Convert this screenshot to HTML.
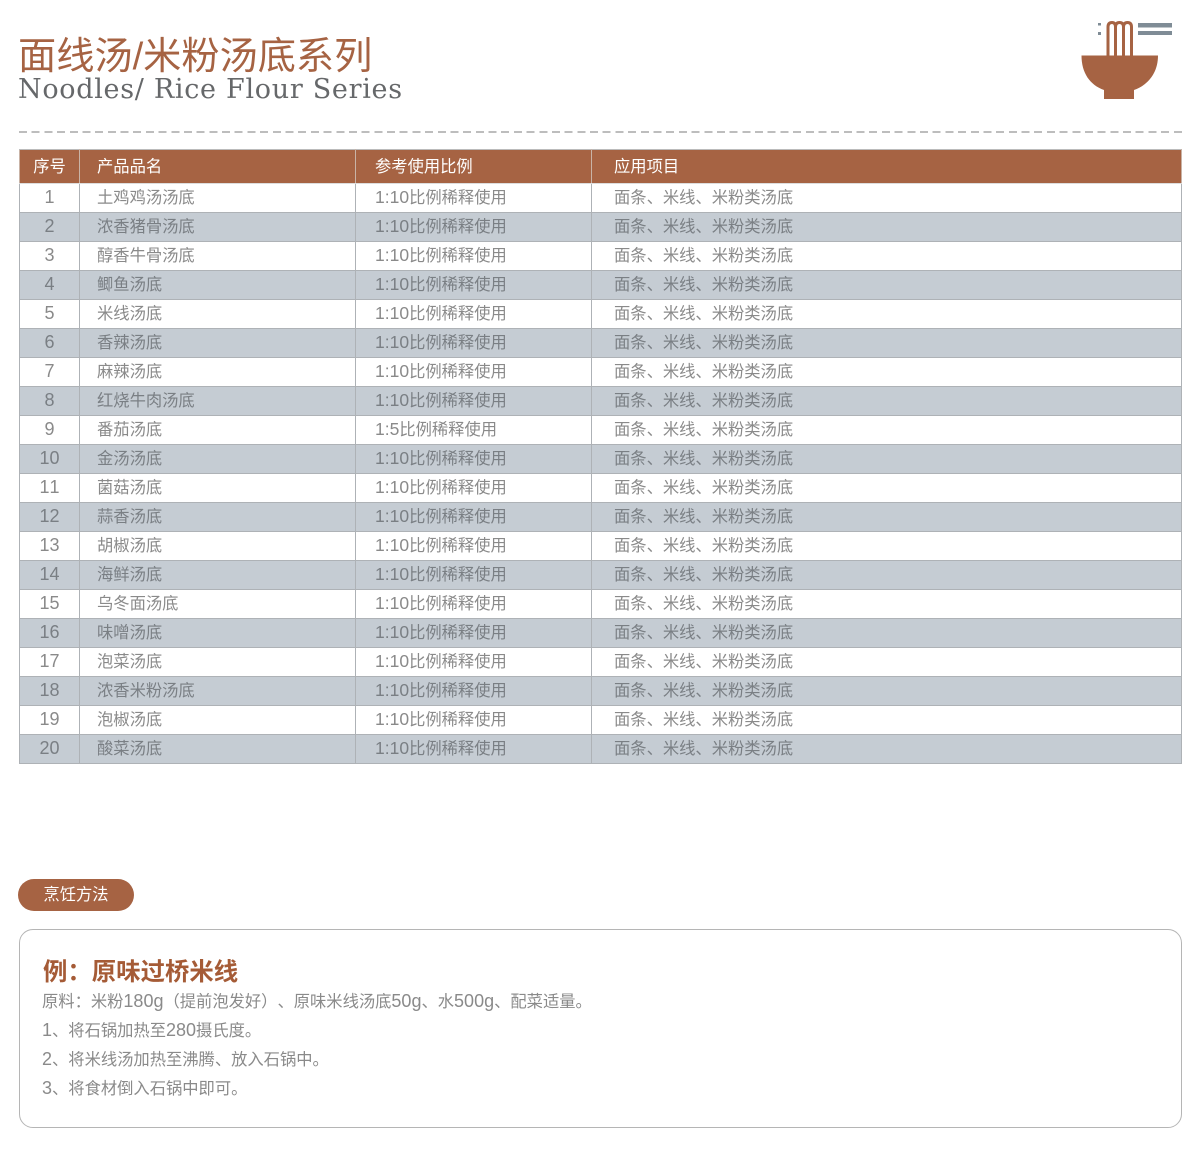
<!DOCTYPE html>
<html lang="zh"><head><meta charset="utf-8"><title>面线汤/米粉汤底系列</title>
<style>
html,body{margin:0;padding:0;background:#fff}
#p{position:relative;width:1200px;height:1158px;overflow:hidden;background:#fff;font-family:"Liberation Sans","Noto Sans CJK SC",sans-serif;color:#8a8a8a;text-spacing-trim:space-all;font-kerning:none}
.a{position:absolute;white-space:nowrap}
i{font-style:normal;font-size:18px;line-height:0}
table{position:absolute;left:19px;top:149px;width:1163px;border-collapse:collapse;table-layout:fixed;font-size:16.3px}
th,td{padding:1px 0 0;border:1px solid #aeb2b6;white-space:nowrap;overflow:hidden;font-weight:400;line-height:27px;height:27px}
th{background:#a66343;color:#fff;padding-top:2px;height:31px;line-height:31px;text-align:left;border-color:#c9b3a6;border-top-color:#bbb;border-bottom-color:#ddd}
tr{height:29px}
td i{font-size:17.5px}
tr:nth-child(even) td{background:#c5ccd3;color:#7a7f84}
td:nth-child(1),th:nth-child(1){text-align:center}
td:nth-child(1){font-size:18px;padding:0 0 2px;line-height:26px;height:26px}
td:nth-child(2),th:nth-child(2){padding-left:17px}
td:nth-child(3),th:nth-child(3){padding-left:19px}
td:nth-child(4),th:nth-child(4){padding-left:22px}
</style></head><body><div id="p">
<div class="a" style="left:18px;top:32px;font-size:38.2px;line-height:50px;color:#a66343">面线汤/米粉汤底系列</div>
<div class="a" style="left:18px;top:72px;font-family:'DejaVu Serif',serif;font-size:27px;line-height:36px;color:#66686a;letter-spacing:.7px">Noodles/ Rice Flour Series</div>
<svg class="a" style="left:1075px;top:15px" width="105" height="90" viewBox="0 0 105 90">
<path d="M63 8H97V12.500H63ZM63 16H97V20H63Z" fill="#7f8c96"/>
<rect x="23" y="8" width="3" height="2.500" fill="#7f8c96"/><rect x="23" y="17" width="3" height="3" fill="#7f8c96"/>
<path d="M33 41V12Q33 7.500 37 7.500Q40.500 7.500 40.500 12V41M40.500 12Q40.500 7.500 44.500 7.500Q48.500 7.500 48.500 12V41M48.500 12Q48.500 7.500 52.500 7.500Q56.500 7.500 56.500 12V41" fill="none" stroke="#a66343" stroke-width="3"/>
<path d="M6.500 40.500H83C83 58 73 70 59 75V84H29V75C15 70 6.500 58 6.500 40.500Z" fill="#a66343"/>
</svg>
<div class="a" style="left:19px;top:131px;width:1163px;height:2px;background:repeating-linear-gradient(90deg,#bdbdbd 0 8px,transparent 8px 12.690px)"></div>
<table><colgroup><col style="width:60px"><col style="width:276px"><col style="width:236px"><col></colgroup>
<thead><tr style="height:33px"><th>序号</th><th>产品品名</th><th>参考使用比例</th><th>应用项目</th></tr></thead>
<tbody>
<tr><td>1</td><td>土鸡鸡汤汤底</td><td><i>1:10</i>比例稀释使用</td><td>面条、米线、米粉类汤底</td></tr>
<tr><td>2</td><td>浓香猪骨汤底</td><td><i>1:10</i>比例稀释使用</td><td>面条、米线、米粉类汤底</td></tr>
<tr><td>3</td><td>醇香牛骨汤底</td><td><i>1:10</i>比例稀释使用</td><td>面条、米线、米粉类汤底</td></tr>
<tr><td>4</td><td>鲫鱼汤底</td><td><i>1:10</i>比例稀释使用</td><td>面条、米线、米粉类汤底</td></tr>
<tr><td>5</td><td>米线汤底</td><td><i>1:10</i>比例稀释使用</td><td>面条、米线、米粉类汤底</td></tr>
<tr><td>6</td><td>香辣汤底</td><td><i>1:10</i>比例稀释使用</td><td>面条、米线、米粉类汤底</td></tr>
<tr><td>7</td><td>麻辣汤底</td><td><i>1:10</i>比例稀释使用</td><td>面条、米线、米粉类汤底</td></tr>
<tr><td>8</td><td>红烧牛肉汤底</td><td><i>1:10</i>比例稀释使用</td><td>面条、米线、米粉类汤底</td></tr>
<tr><td>9</td><td>番茄汤底</td><td><i>1:5</i>比例稀释使用</td><td>面条、米线、米粉类汤底</td></tr>
<tr><td>10</td><td>金汤汤底</td><td><i>1:10</i>比例稀释使用</td><td>面条、米线、米粉类汤底</td></tr>
<tr><td>11</td><td>菌菇汤底</td><td><i>1:10</i>比例稀释使用</td><td>面条、米线、米粉类汤底</td></tr>
<tr><td>12</td><td>蒜香汤底</td><td><i>1:10</i>比例稀释使用</td><td>面条、米线、米粉类汤底</td></tr>
<tr><td>13</td><td>胡椒汤底</td><td><i>1:10</i>比例稀释使用</td><td>面条、米线、米粉类汤底</td></tr>
<tr><td>14</td><td>海鲜汤底</td><td><i>1:10</i>比例稀释使用</td><td>面条、米线、米粉类汤底</td></tr>
<tr><td>15</td><td>乌冬面汤底</td><td><i>1:10</i>比例稀释使用</td><td>面条、米线、米粉类汤底</td></tr>
<tr><td>16</td><td>味噌汤底</td><td><i>1:10</i>比例稀释使用</td><td>面条、米线、米粉类汤底</td></tr>
<tr><td>17</td><td>泡菜汤底</td><td><i>1:10</i>比例稀释使用</td><td>面条、米线、米粉类汤底</td></tr>
<tr><td>18</td><td>浓香米粉汤底</td><td><i>1:10</i>比例稀释使用</td><td>面条、米线、米粉类汤底</td></tr>
<tr><td>19</td><td>泡椒汤底</td><td><i>1:10</i>比例稀释使用</td><td>面条、米线、米粉类汤底</td></tr>
<tr><td>20</td><td>酸菜汤底</td><td><i>1:10</i>比例稀释使用</td><td>面条、米线、米粉类汤底</td></tr>
</tbody></table>
<div class="a" style="left:18px;top:879px;width:116px;height:32px;border-radius:16px;background:#a66343;color:#fff;font-size:16.3px;line-height:33px;text-align:center">烹饪方法</div>
<div class="a" style="left:18.500px;top:929px;width:1161px;height:197px;border:1px solid #b5b5b5;border-radius:14px;box-sizing:content-box"></div>
<div class="a" style="left:43px;top:957px;font-size:24.400px;line-height:32px;font-weight:700;color:#a55b36">例：原味过桥米线</div>
<div class="a" style="left:42px;top:988px;font-size:16.3px;line-height:29px">原料：米粉<i>180g</i>（提前泡发好）、原味米线汤底<i>50g</i>、水<i>500g</i>、配菜适量。</div>
<div class="a" style="left:42px;top:1017px;font-size:16.3px;line-height:29px"><i>1</i>、将石锅加热至<i>280</i>摄氏度。</div>
<div class="a" style="left:42px;top:1046px;font-size:16.3px;line-height:29px"><i>2</i>、将米线汤加热至沸腾、放入石锅中。</div>
<div class="a" style="left:42px;top:1075px;font-size:16.3px;line-height:29px"><i>3</i>、将食材倒入石锅中即可。</div>
</div></body></html>
